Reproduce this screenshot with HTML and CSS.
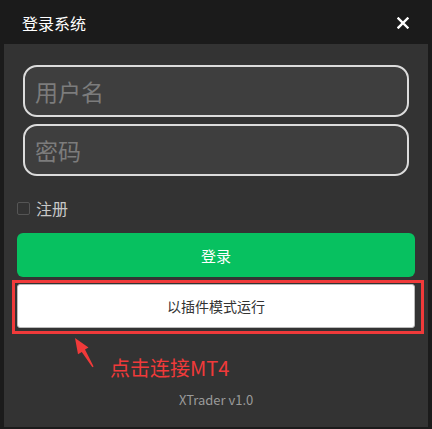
FILE: index.html
```html
<!DOCTYPE html>
<html lang="zh-CN">
<head>
    <meta charset="UTF-8">
    <title>登录系统</title>
    <link rel="stylesheet" href="styles.css">
</head>
<body>
    <div class="title-bar">
        <span class="title">登录系统</span>
        <button type="button" class="close-button" aria-label="关闭">
            <svg width="12" height="12" viewBox="0 0 12 12">
                <path d="M1.5 1.5 L10.5 10.5 M10.5 1.5 L1.5 10.5" stroke="#fff" stroke-width="2.4" stroke-linecap="square"/>
            </svg>
        </button>
    </div>

    <div class="panel">
        <form class="login-form">
            <input type="text" class="field" placeholder="用户名">
            <input type="password" class="field" placeholder="密码">

            <label class="register-row">
                <span class="checkbox"></span>
                <span>注册</span>
            </label>

            <button type="button" class="login-button">登录</button>

            <div class="plugin-wrap">
                <button type="button" class="plugin-button">以插件模式运行</button>
                <div class="highlight-box"></div>
                <svg class="hint-arrow" width="30" height="34" viewBox="70 335 30 34">
                    <polygon fill="#f03a3a" points="75,338 88.5,347.4 85,349.6 93.6,366.6 92.4,367.3 81.8,351.9 78,354.2"/>
                </svg>
            </div>

            <div class="hint">点击连接MT4</div>
        </form>

        <div class="version">XTrader v1.0</div>
    </div>
</body>
</html>
```

FILE: styles.css
```css
* {
    margin: 0;
    padding: 0;
    box-sizing: border-box;
    font-family: "Noto Sans CJK SC", "Noto Sans", sans-serif;
}

body {
    width: 432px;
    height: 429px;
    background: #1b1b1b;
    overflow: hidden;
}

.title-bar {
    height: 44px;
    display: flex;
    align-items: center;
    justify-content: space-between;
    padding: 0 23px 0 22px;
}

.title {
    color: #fff;
    font-size: 16px;
    line-height: 1;
    margin-top: 2px;
}

.close-button {
    background: none;
    border: none;
    width: 12px;
    height: 12px;
    display: flex;
    margin-top: 2px;
    cursor: pointer;
}

.panel {
    margin: 0 4px;
    height: 383px;
    background: #333333;
    padding: 21px 13px 0;
    display: flex;
    flex-direction: column;
}

.login-form {
    display: flex;
    flex-direction: column;
}

.field {
    height: 52px;
    margin: 0 6px 7px;
    border: 2px solid #dcdcdc;
    border-radius: 14px;
    background: #3e3e3e;
    padding: 0 10px;
    font-size: 23px;
    color: #ddd;
    outline: none;
}

.field::placeholder {
    color: #7c7c7c;
}

.register-row {
    display: flex;
    align-items: center;
    gap: 6px;
    margin-top: 13px;
    height: 24px;
    color: #c8c8c8;
    font-size: 16px;
}

.checkbox {
    width: 13px;
    height: 13px;
    border: 1px solid #555;
    border-radius: 2px;
}

.login-button {
    margin-top: 13px;
    height: 44px;
    background: #07c160;
    color: #fff;
    border: none;
    border-radius: 6px;
    font-size: 15px;
    cursor: pointer;
}

.plugin-wrap {
    position: relative;
    margin-top: 7px;
}

.plugin-button {
    width: 100%;
    height: 44px;
    background: #fff;
    color: #333;
    border: 1px solid #bbb;
    border-radius: 3px;
    font-size: 14px;
    cursor: pointer;
}

.highlight-box {
    position: absolute;
    left: -5px;
    top: -4px;
    width: 412px;
    height: 54px;
    border: 3px solid #f03a3a;
    pointer-events: none;
}

.hint-arrow {
    position: absolute;
    left: 53px;
    top: 51px;
}

.hint {
    margin: 28px 0 0 93px;
    color: #f03a3a;
    font-size: 20px;
    line-height: 24px;
}

.version {
    margin: 11px 0 0 162px;
    color: #9a9a9a;
    font-size: 13px;
    line-height: 18px;
}
```
